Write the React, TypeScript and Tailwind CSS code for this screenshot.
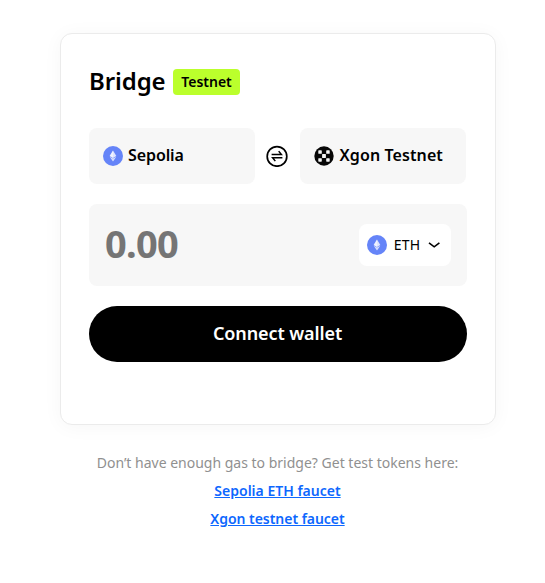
function EthIcon() {
  return (
    <svg className="size-5 shrink-0" viewBox="0 0 20 20">
      <circle cx="10" cy="10" r="10" fill="#6584f8" />
      <path d="M10 4.4 13.3 10 10 12 6.7 10Z" fill="#fff" fillOpacity=".8" />
      <path d="M10 4.4V12L6.7 10Z" fill="#fff" fillOpacity=".5" />
      <path d="M6.7 10.7 10 12.6 13.3 10.7 10 15.6Z" fill="#fff" fillOpacity=".75" />
    </svg>
  );
}

function XgonIcon() {
  return (
    <svg className="size-5 shrink-0" viewBox="0 0 20 20">
      <circle cx="10" cy="10" r="9.7" fill="#080808" />
      <g fill="#f7f7f7">
        <rect x="4.3" y="4.3" width="3.5" height="3.5" rx=".6" />
        <rect x="12.2" y="4.3" width="3.5" height="3.5" rx=".6" />
        <rect x="8.1" y="8.1" width="3.8" height="3.8" rx=".3" />
        <rect x="4.3" y="12.2" width="3.5" height="3.5" rx=".6" />
        <rect x="12.2" y="12.2" width="3.5" height="3.5" rx=".6" />
      </g>
    </svg>
  );
}

function SwapIcon() {
  return (
    <svg className="size-[22px]" viewBox="0 0 22 22" fill="none" stroke="#000">
      <circle cx="11" cy="11.4" r="9.8" strokeWidth="1.7" />
      <path d="M5.6 9.5H15.4L12.7 6.1M16.4 12.7H6.6L9.3 16.1" strokeWidth="1.5" />
    </svg>
  );
}

export default function App() {
  return (
    <main className="flex h-[583px] w-[545px] flex-col overflow-hidden bg-white pt-[33px] pl-[60px] font-['Noto_Sans','Open_Sans',sans-serif] text-black">
      <section className="h-[392px] w-[436px] shrink-0 rounded-xl border border-[#ebebeb] bg-white px-7 pt-[34px] shadow-[0_2px_20px_rgba(0,0,0,0.04)]">
        <header className="flex h-[28px] items-center gap-2">
          <h1 className="w-[76px] pb-0.5 text-[24px] leading-7 font-semibold tracking-[-0.1px] whitespace-nowrap">Bridge</h1>
          <span className="flex h-[26px] w-[67px] items-center justify-center rounded bg-[#bbff2c] pb-0.5 text-[14px] font-semibold">Testnet</span>
        </header>
        <div className="mt-8 flex items-center">
          <div className="flex h-14 w-[166px] items-center gap-[5px] rounded-lg bg-[#f7f7f7] px-[14px] text-[16px] font-semibold tracking-[-0.1px]">
            <EthIcon />
            <span className="pb-0.5">Sepolia</span>
          </div>
          <div className="flex w-[45px] pl-[11px]">
            <SwapIcon />
          </div>
          <div className="flex h-14 w-[166px] items-center gap-[5px] rounded-lg bg-[#f7f7f7] px-[14px] text-[16px] font-semibold tracking-[0.1px] whitespace-nowrap">
            <XgonIcon />
            <span className="pb-0.5 pl-[0.5px]">Xgon Testnet</span>
          </div>
        </div>
        <div className="mt-5 flex h-[82px] items-center justify-between rounded-lg bg-[#f7f7f7] px-4">
          <span className="pb-1 text-[38px] leading-none font-bold tracking-[-0.7px] text-[#757575]">0.00</span>
          <button className="flex h-[42px] w-[92px] items-center rounded-lg bg-white pl-2 text-[14px]">
            <EthIcon />
            <span className="ml-1.5 w-[28px] pb-0.5 tracking-[0.2px]">ETH</span>
            <svg className="ml-[7px] size-3" viewBox="0 0 12 12" fill="none" stroke="#000" strokeWidth="1.6">
              <path d="M1 3.9 6.2 7.8 11.4 3.9" />
            </svg>
          </button>
        </div>
        <button className="mt-5 flex h-14 w-full items-center justify-center rounded-full bg-black pr-px pb-0.5 text-[18px] font-semibold tracking-[-0.1px] text-white">Connect wallet</button>
      </section>
      <footer className="mt-6 flex w-[435px] flex-col items-center text-[14px] leading-7 whitespace-nowrap">
        <p className="text-[#909090]">Don’t have enough gas to bridge? Get test tokens here:</p>
        <a className="font-semibold text-[#0d67fe] underline" href="#sepolia">Sepolia ETH faucet</a>
        <a className="font-semibold tracking-[-0.04px] text-[#0d67fe] underline" href="#xgon">Xgon testnet faucet</a>
      </footer>
    </main>
  );
}
